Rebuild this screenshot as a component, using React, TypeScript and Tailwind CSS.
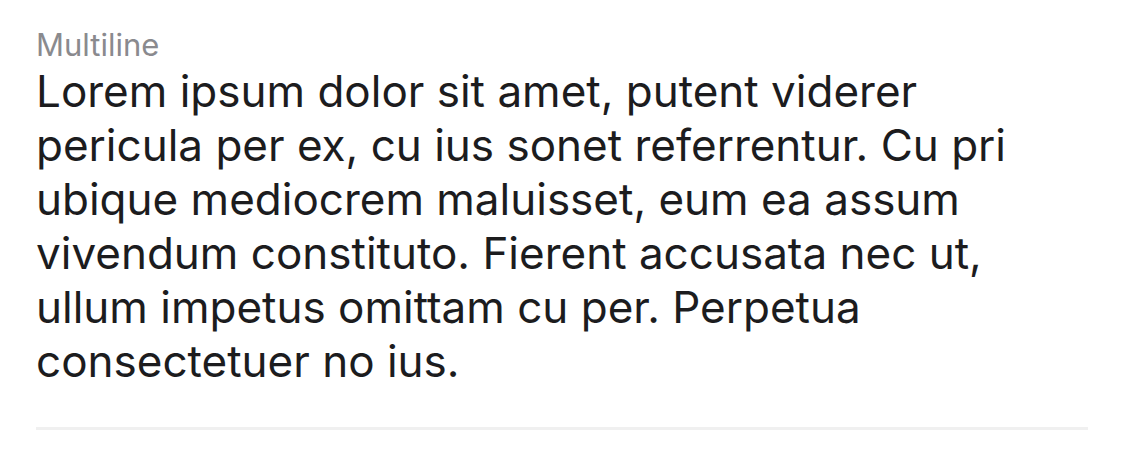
export default function App() {
  return (
    <div className="min-h-[451px] w-full bg-white font-['Inter',sans-serif]">
      <div className="pl-[36px] pr-[36px] pt-[26px]">
        <div className="pb-[39px]">
          <p className="text-[31px] leading-[38px] text-[#8a8a8e]">Multiline</p>
          <p className="max-w-[1000px] text-[44px] leading-[54px] text-[#1c1c1e]">
            Lorem ipsum dolor sit amet, putent viderer pericula per ex, cu ius sonet referrentur. Cu pri
            ubique mediocrem maluisset, eum ea assum vivendum constituto. Fierent accusata nec ut, ullum
            impetus omittam cu per. Perpetua consectetuer no ius.
          </p>
        </div>
        <div className="h-[3px] bg-[#f0f0f0]" />
      </div>
    </div>
  );
}
